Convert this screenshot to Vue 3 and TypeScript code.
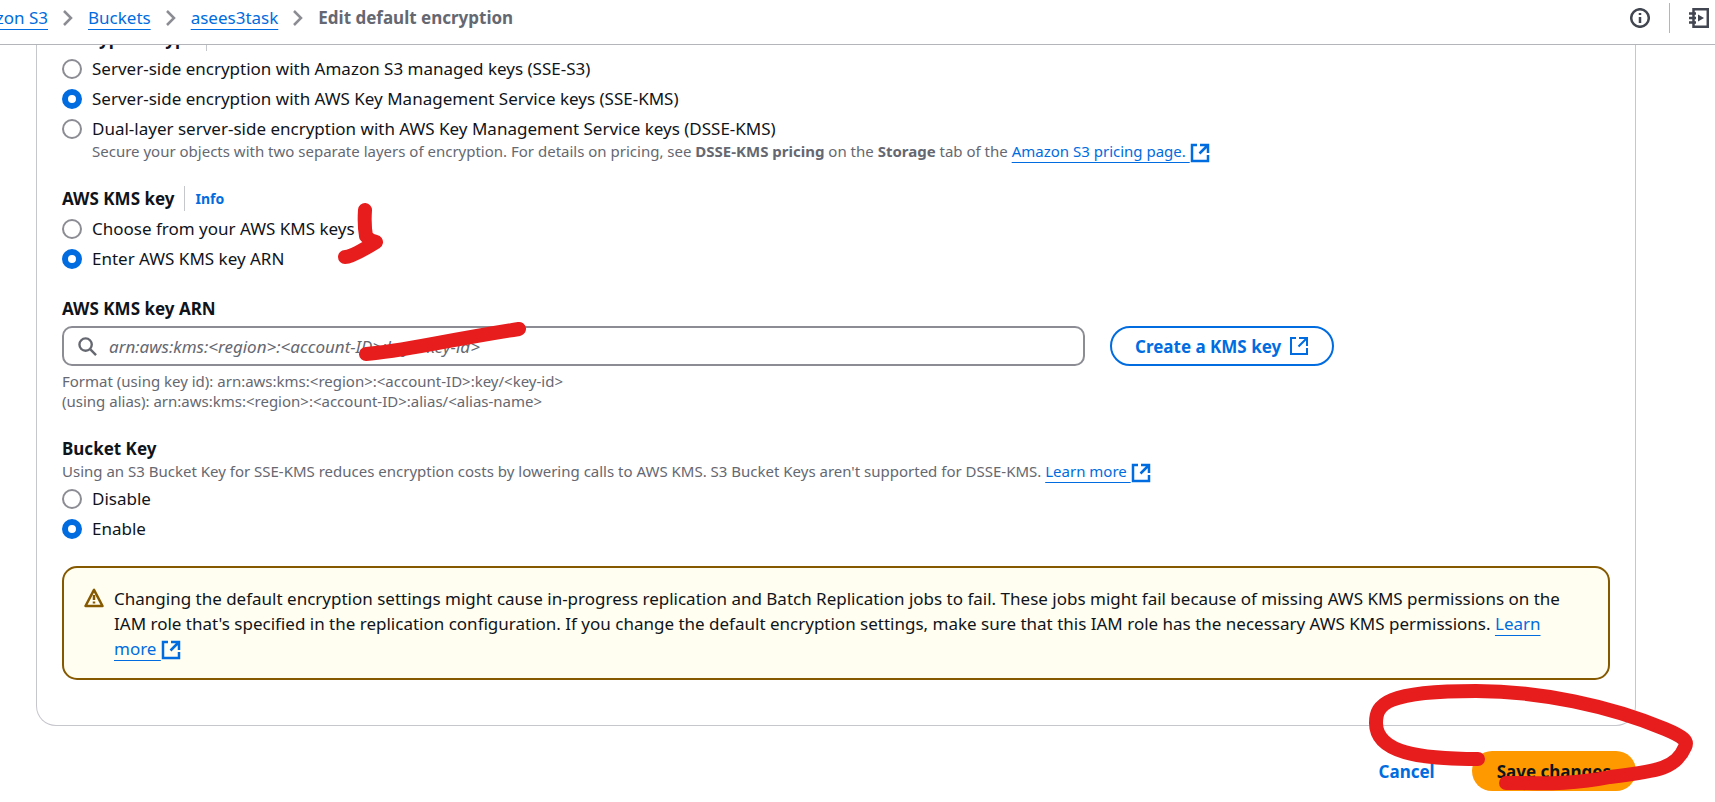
<script setup lang="ts">
import { defineComponent, h, ref } from 'vue'

const ExternalIcon = defineComponent({
  render: () =>
    h('svg', { viewBox: '0 0 20 20', role: 'img', 'aria-label': 'Opens in a new tab' }, [
      h('path', { d: 'M7 2H2v16h16v-6M10 2h8v8M18 2L9.5 10.5', fill: 'none', stroke: 'currentColor' }),
    ]),
})

const encryption = ref('sse-kms')
const keySource = ref('arn')
const bucketKey = ref('enable')
const arn = ref('')
</script>

<template>
  <div class="page">
    <header class="topbar">
      <nav class="crumbs" aria-label="Breadcrumbs">
        <span class="first"><a href="#">Amazon S3</a></span>
        <svg class="chevron" viewBox="0 0 16 20"><path d="M4 3l7 7-7 7" /></svg>
        <a href="#">Buckets</a>
        <svg class="chevron" viewBox="0 0 16 20"><path d="M4 3l7 7-7 7" /></svg>
        <a href="#">asees3task</a>
        <svg class="chevron" viewBox="0 0 16 20"><path d="M4 3l7 7-7 7" /></svg>
        <strong>Edit default encryption</strong>
      </nav>
      <div class="tools">
        <button class="icon-btn" aria-label="Info">
          <svg viewBox="0 0 20 20"><circle cx="10" cy="10" r="8.8" /><path d="M10 9v6M10 5v2" /></svg>
        </button>
        <span class="rule"></span>
        <button class="icon-btn" aria-label="Tutorials">
          <svg viewBox="0 0 20 20"><path d="M4.500 1.200h14.300v17.600H4.500zM0 5.500h7M0 10h7M0 14.500h7" /><path class="solid" d="M9 6.500l6 3.500-6 3.500z" /></svg>
        </button>
      </div>
    </header>

    <main>
      <section class="card">
        <fieldset>
          <legend><span class="title">Encryption type</span><a class="info" href="#">Info</a></legend>
          <div class="options">
            <label class="option"><input v-model="encryption" type="radio" name="enc" value="sse-s3" /><span>Server-side encryption with Amazon S3 managed keys (SSE-S3)</span></label>
            <label class="option"><input v-model="encryption" type="radio" name="enc" value="sse-kms" /><span>Server-side encryption with AWS Key Management Service keys (SSE-KMS)</span></label>
            <label class="option"><input v-model="encryption" type="radio" name="enc" value="dsse-kms" /><span>Dual-layer server-side encryption with AWS Key Management Service keys (DSSE-KMS)</span></label>
          </div>
          <p class="hint indented">Secure your objects with two separate layers of encryption. For details on pricing, see <b>DSSE-KMS pricing</b> on the <b>Storage</b> tab of the <a href="#">Amazon S3 pricing page.&nbsp;</a><ExternalIcon class="external" /></p>
        </fieldset>

        <fieldset>
          <legend><span class="title">AWS KMS key</span><a class="info" href="#">Info</a></legend>
          <div class="options">
            <label class="option"><input v-model="keySource" type="radio" name="src" value="choose" /><span>Choose from your AWS KMS keys</span></label>
            <label class="option"><input v-model="keySource" type="radio" name="src" value="arn" /><span>Enter AWS KMS key ARN</span></label>
          </div>
        </fieldset>

        <div class="field">
          <label class="title" for="arn">AWS KMS key ARN</label>
          <div class="row">
            <div class="search">
              <svg viewBox="0 0 20 20"><circle cx="8" cy="8" r="6.500" /><path d="M13 13l6 6" /></svg>
              <input id="arn" v-model="arn" type="text" placeholder="arn:aws:kms:<region>:<account-ID>:key/<key-id>" />
            </div>
            <button class="btn outline">Create a KMS key <ExternalIcon class="external thin" /></button>
          </div>
          <p class="hint">Format (using key id): arn:aws:kms:&lt;region&gt;:&lt;account-ID&gt;:key/&lt;key-id&gt;<br />(using alias): arn:aws:kms:&lt;region&gt;:&lt;account-ID&gt;:alias/&lt;alias-name&gt;</p>
        </div>

        <fieldset>
          <legend><span class="title">Bucket Key</span></legend>
          <p class="hint">Using an S3 Bucket Key for SSE-KMS reduces encryption costs by lowering calls to AWS KMS. S3 Bucket Keys aren't supported for DSSE-KMS. <a href="#">Learn more&nbsp;</a><ExternalIcon class="external" /></p>
          <div class="options">
            <label class="option"><input v-model="bucketKey" type="radio" name="bk" value="disable" /><span>Disable</span></label>
            <label class="option"><input v-model="bucketKey" type="radio" name="bk" value="enable" /><span>Enable</span></label>
          </div>
        </fieldset>

        <div class="alert" role="alert">
          <svg class="warn" viewBox="0 0 20 20"><path d="M10 1.800L1.500 18h17z" /><path d="M10 7v5M10 13.500v2" /></svg>
          <p>Changing the default encryption settings might cause in-progress replication and Batch Replication jobs to fail. These jobs might fail because of missing AWS KMS permissions on the IAM role that's specified in the replication configuration. If you change the default encryption settings, make sure that this IAM role has the necessary AWS KMS permissions. <a href="#">Learn more&nbsp;</a><ExternalIcon class="external" /></p>
        </div>
      </section>

      <footer class="actions">
        <button class="btn plain">Cancel</button>
        <button class="btn primary">Save changes</button>
      </footer>
    </main>

    <svg class="marks" width="1715" height="802" viewBox="0 0 1715 802" aria-hidden="true">
      <path d="M365 210Q364 225 366 236Q370 241 376 242Q352 257 345 257" />
      <path d="M366 354C400 352 436 342 519 329" />
      <path d="M1478 759C1420 759 1376 753 1376 723C1376 704 1386 691 1476 691C1540 691 1610 706 1665 729C1684 737 1688 741 1685 747C1676 768 1660 771 1610 777C1570 785 1540 783 1506 783" />
    </svg>
  </div>
</template>

<style>
body {
  margin: 0;
  background: #fff;
}
</style>

<style scoped>
.page {
  position: relative;
  min-height: 100vh;
  overflow: hidden;
  box-sizing: border-box;
  color: #0f141a;
  font: 17px/25px "Noto Sans", "Open Sans", sans-serif;
}
a {
  color: #006ce0;
  text-decoration: underline;
  text-decoration-thickness: 1px;
  text-underline-offset: 5px;
}
.topbar {
  position: relative;
  z-index: 1;
  display: flex;
  justify-content: space-between;
  align-items: flex-start;
  height: 44px;
  background: #fff;
  border-bottom: 1px solid #b4b4bb;
}
.crumbs {
  display: flex;
  align-items: center;
  gap: 12px;
  padding-top: 5px;
}
.first {
  display: flex;
  justify-content: flex-end;
  width: 48px;
  overflow: hidden;
  white-space: nowrap;
}
.chevron {
  width: 16px;
  height: 20px;
  fill: none;
  stroke: #8c8c94;
  stroke-width: 2.500;
}
.crumbs strong {
  color: #656871;
}
.tools {
  display: flex;
  align-items: center;
  gap: 19px;
  padding: 3px 6px 0 0;
}
.icon-btn {
  display: flex;
  padding: 0;
  border: 0;
  background: none;
}
.icon-btn svg {
  width: 20px;
  height: 20px;
  fill: none;
  stroke: #424650;
  stroke-width: 2.500;
}
.icon-btn .solid {
  fill: #424650;
  stroke: none;
}
.rule {
  width: 1px;
  height: 30px;
  background: #b4b4bb;
}
main {
  margin: -19px 79px 0 36px;
}
.card {
  display: flex;
  flex-direction: column;
  gap: 25px;
  padding: 0 25px 45px;
  border: 1px solid #c6c6cd;
  border-top: 0;
  border-radius: 0 0 20px 20px;
}
fieldset {
  min-width: 0;
  margin: 0;
  padding: 0;
  border: 0;
}
legend {
  display: flex;
  padding: 0;
}
.title {
  font-weight: 700;
}
.info {
  margin-left: 10px;
  padding-left: 10px;
  border-left: 1px solid #c6c6cd;
  font-size: 14px;
  font-weight: 700;
  text-decoration: none;
}
.options {
  display: flex;
  flex-direction: column;
  gap: 5px;
  padding-top: 5px;
}
.option {
  display: flex;
  align-items: center;
  gap: 10px;
}
.option input {
  appearance: none;
  flex: none;
  width: 20px;
  height: 20px;
  margin: 0;
  border: 2px solid #8c8c94;
  border-radius: 50%;
  background: #fff;
}
.option input:checked {
  border: 6px solid #006ce0;
}
.hint {
  margin: 0;
  color: #656871;
  font-size: 15px;
  line-height: 20px;
}
.indented {
  padding-left: 30px;
}
.external {
  width: 20px;
  height: 20px;
  margin: -4px 0;
  vertical-align: middle;
  color: #006ce0;
  stroke-width: 2.500;
}
.thin {
  stroke-width: 2;
}
.field {
  display: flex;
  flex-direction: column;
  gap: 5px;
}
.row {
  display: flex;
  gap: 25px;
}
.search {
  display: flex;
  align-items: center;
  gap: 12px;
  flex: 0 1 1023px;
  box-sizing: border-box;
  height: 40px;
  padding: 0 14px;
  border: 2px solid #8c8c94;
  border-radius: 10px;
}
.search svg {
  flex: none;
  width: 19px;
  height: 19px;
  fill: none;
  stroke: #656871;
  stroke-width: 2.500;
}
.search input {
  flex: 1;
  min-width: 0;
  padding: 0;
  border: 0;
  outline: 0;
  font: inherit;
}
.search input::placeholder {
  color: #656871;
  font-style: italic;
  opacity: 1;
}
.btn {
  height: 40px;
  padding: 0 23px;
  border: 2px solid transparent;
  border-radius: 20px;
  background: none;
  color: #006ce0;
  font: inherit;
  font-weight: 700;
  white-space: nowrap;
}
.outline {
  display: flex;
  align-items: center;
  gap: 8px;
  border-color: #006ce0;
}
.primary {
  background: #ff9900 border-box;
  color: #0f141a;
}
.alert {
  display: flex;
  gap: 10px;
  padding: 18px 30px 17px 20px;
  border: 2px solid #855900;
  border-radius: 15px;
  background: #fffef0;
}
.alert p {
  margin: 0;
}
.warn {
  flex: none;
  width: 20px;
  height: 20px;
  margin-top: 2px;
  fill: none;
  stroke: #855900;
  stroke-width: 2.500;
  stroke-linejoin: round;
}
.actions {
  display: flex;
  justify-content: flex-end;
  gap: 12px;
  padding-top: 25px;
}
.marks {
  position: absolute;
  z-index: 2;
  top: 0;
  left: 0;
  pointer-events: none;
  fill: none;
  stroke: #e71c1c;
  stroke-width: 14;
  stroke-linecap: round;
  stroke-linejoin: round;
}
</style>
